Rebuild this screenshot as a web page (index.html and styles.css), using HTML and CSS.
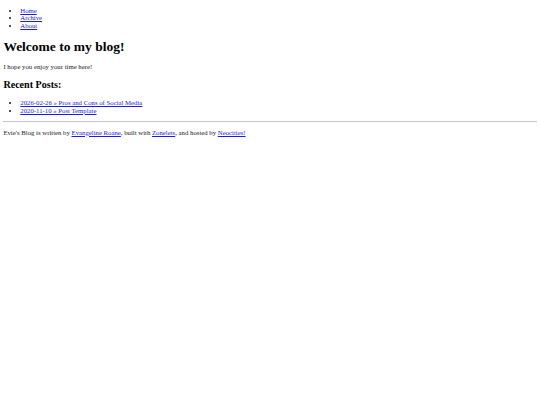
FILE: index.html
```html
<!DOCTYPE html>
<html lang="en">
<head>
<meta charset="utf-8">
<title>Evie's Blog</title>
<link rel="stylesheet" href="styles.css">
</head>
<body>
<div class="container">
  <nav class="header">
    <ul class="nav-list">
      <li><a href="#">Home</a></li>
      <li><a href="#">Archive</a></li>
      <li><a href="#">About</a></li>
    </ul>
  </nav>
  <main class="content">
    <h1 class="title">Welcome to my blog!</h1>
    <p class="intro">I hope you enjoy your time here!</p>
    <h2 class="subtitle">Recent Posts:</h2>
    <ul class="post-list">
      <li><a href="#">2026-02-26 » Pros and Cons of Social Media</a></li>
      <li><a href="#">2020-11-10 » Post Template</a></li>
    </ul>
  </main>
  <footer class="footer">
    <hr class="rule">
    <p class="credits">Evie's Blog is written by <a href="#">Evangeline Roane</a>, built with <a href="#">Zonelets</a>, and hosted by <a href="#">Neocities!</a></p>
  </footer>
</div>
</body>
</html>
```

FILE: styles.css
```css
html {
  background: #ffffff;
}
body {
  margin: 3.375px;
  font-family: "Liberation Serif", "Times New Roman", serif;
  font-size: 6.75px;
  line-height: 7.6px;
  color: #1a1a1a;
}
a {
  color: #1c1ce6;
}
.nav-list,
.post-list {
  margin: 6.75px 0;
  padding-left: 16.9px;
}
.nav-list {
  margin-top: 3.375px;
}
.title {
  font-size: 13.5px;
  line-height: 15.5px;
  margin: 9.05px 0;
  color: #000000;
}
.subtitle {
  font-size: 10.1px;
  line-height: 11.6px;
  margin: 8.4px 0;
  color: #000000;
}
.intro,
.credits {
  margin: 6.75px 0;
}
.rule {
  margin: 3.4px 0;
  border: none;
  border-top: 1px solid #c4c4c4;
  height: 0;
}
```
